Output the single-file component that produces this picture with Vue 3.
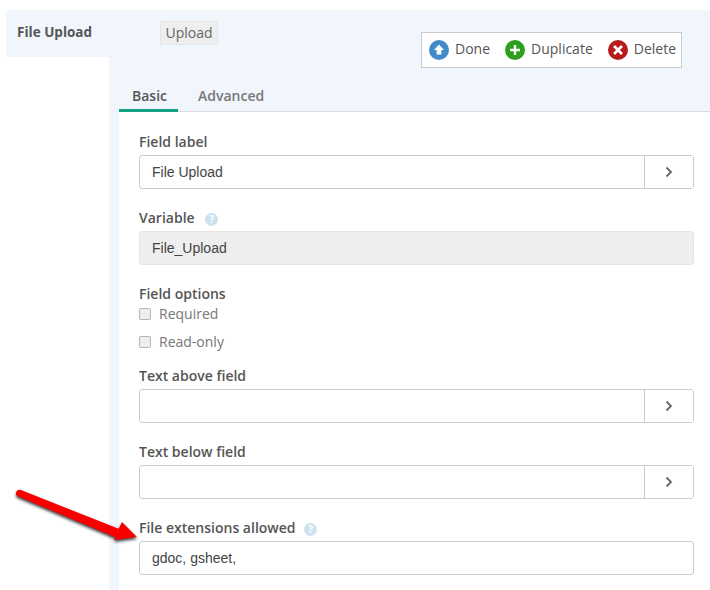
<script setup>
const tabs = [
  { label: 'Basic', active: true },
  { label: 'Advanced', active: false },
]
</script>

<template>
  <div class="page">
    <aside class="side">
      <div class="side-tab">File Upload</div>
    </aside>
    <main class="panel">
      <header class="head">
        <span class="chip">Upload</span>
        <div class="toolbar">
          <span class="tool done">
            <svg class="ico" viewBox="0 0 20 20"><circle cx="10" cy="10" r="10" fill="#428bca" /><path d="M10 4.600 15 10H12.400V14.600H7.600V10H5Z" fill="#fff" /></svg>
            <span class="txt">Done</span>
          </span>
          <span class="tool dup">
            <svg class="ico" viewBox="0 0 20 20"><circle cx="10" cy="10" r="10" fill="#2ca01c" /><path d="M10 5V15M5 10H15" stroke="#fff" stroke-width="2.400" fill="none" /></svg>
            <span class="txt">Duplicate</span>
          </span>
          <span class="tool del">
            <svg class="ico" viewBox="0 0 20 20"><circle cx="10" cy="10" r="10" fill="#b71c1c" /><path d="M6 6 14 14M14 6 6 14" stroke="#fff" stroke-width="2.600" fill="none" /></svg>
            <span class="txt">Delete</span>
          </span>
        </div>
      </header>
      <nav class="tabs">
        <span v-for="t in tabs" :key="t.label" class="tab" :class="{ active: t.active }">{{ t.label }}</span>
      </nav>
      <section class="form">
        <div class="group">
          <label class="lbl">Field label</label>
          <div class="inp-row">
            <input class="inp" value="File Upload" />
            <button class="go"><svg viewBox="0 0 10 12" width="10" height="12"><path d="M2.500 1.500 7 6 2.500 10.500" fill="none" stroke="#666" stroke-width="1.800" /></svg></button>
          </div>
        </div>
        <div class="group">
          <label class="lbl">Variable <span class="help wide">?</span></label>
          <input class="inp solo off" value="File_Upload" readonly />
        </div>
        <div class="opts">
          <label class="lbl short">Field options</label>
          <label class="chk"><input type="checkbox" />Required</label>
          <label class="chk"><input type="checkbox" />Read-only</label>
        </div>
        <div class="group">
          <label class="lbl">Text above field</label>
          <div class="inp-row">
            <input class="inp" />
            <button class="go"><svg viewBox="0 0 10 12" width="10" height="12"><path d="M2.500 1.500 7 6 2.500 10.500" fill="none" stroke="#666" stroke-width="1.800" /></svg></button>
          </div>
        </div>
        <div class="group">
          <label class="lbl">Text below field</label>
          <div class="inp-row">
            <input class="inp" />
            <button class="go"><svg viewBox="0 0 10 12" width="10" height="12"><path d="M2.500 1.500 7 6 2.500 10.500" fill="none" stroke="#666" stroke-width="1.800" /></svg></button>
          </div>
        </div>
        <div class="group">
          <label class="lbl">File extensions allowed <span class="help">?</span></label>
          <input class="inp solo" value="gdoc, gsheet," />
        </div>
      </section>
    </main>
    <svg class="arrow" viewBox="0 0 150 70" width="150" height="70">
      <path class="arrow-shape" d="M20.300 10.800 118.700 49.800 122 43 137 58 114 61 115.300 58.200 17.700 17.200A3.500 3.500 0 0 1 20.300 10.800Z" fill="#f80000" />
    </svg>
  </div>
</template>

<style>
html, body { margin: 0; background: #fff; }
</style>

<style scoped>
.page {
  position: relative;
  display: flex;
  width: 710px;
  height: 590px;
  box-sizing: border-box;
  padding: 10px 0 0 6px;
  overflow: hidden;
  background: #fff;
  font-family: "Open Sans", sans-serif;
  color: #555;
}
.side { width: 103px; flex: none; }
.side-tab {
  height: 47px;
  box-sizing: border-box;
  padding: 12px 0 0 11px;
  background: #f1f6fd;
  font-size: 13.5px;
  font-weight: 700;
  line-height: 20px;
  color: #555;
}
.panel {
  flex: 1;
  min-width: 0;
  display: flex;
  flex-direction: column;
  background: #f1f6fd;
  padding-left: 10px;
}
.head {
  display: flex;
  align-items: flex-start;
  justify-content: space-between;
  height: 74px;
  box-sizing: border-box;
  padding: 11px 28px 0 41px;
  flex: none;
}
.chip {
  width: 58px;
  height: 24px;
  box-sizing: border-box;
  border: 1px solid #e6e6e6;
  background: #eee;
  font-size: 14px;
  line-height: 21px;
  text-align: center;
  color: #666;
}
.toolbar {
  display: flex;
  align-items: center;
  width: 261px;
  height: 36px;
  margin-top: 11px;
  box-sizing: border-box;
  border: 1px solid #ccc;
  background: #fff;
  padding-left: 7px;
  font-size: 14px;
  color: #555;
}
.tool { display: flex; align-items: center; gap: 6px; }
.txt { padding-bottom: 3px; }
.dup { margin-left: 15px; }
.del { margin-left: 15px; }
.ico { width: 20px; height: 20px; flex: none; }
.tabs {
  display: flex;
  height: 27px;
  flex: none;
  border-bottom: 1px solid #ddd;
  box-sizing: content-box;
}
.tab {
  font-size: 14px;
  font-weight: 600;
  line-height: 24px;
  color: #777;
  padding: 0 13px;
  margin-right: 7px;
  height: 27px;
  box-sizing: border-box;
}
.tab.active {
  width: 59px;
  color: #555;
  border-bottom: 3px solid #13a085;
  margin-bottom: -1px;
  height: 28px;
}
.form {
  flex: 1;
  background: #fff;
  padding: 20px 16px 0 20px;
}
.group { margin-bottom: 19px; }
.lbl {
  display: block;
  height: 23px;
  font-size: 14px;
  font-weight: 600;
  line-height: 20px;
  color: #555;
}
.lbl.short { height: 20px; }
.help {
  display: inline-block;
  width: 13px;
  height: 13px;
  margin-left: 5px;
  border-radius: 50%;
  background: #cde2ee;
  color: #fff;
  font-size: 10px;
  font-weight: 700;
  line-height: 13px;
  text-align: center;
  vertical-align: 0;
}
.help.wide { margin-left: 7px; }
.inp-row {
  display: flex;
  height: 34px;
  box-sizing: border-box;
  border: 1px solid #ccc;
  border-radius: 3px;
  background: #fff;
}
.inp {
  flex: 1;
  min-width: 0;
  border: 0;
  padding: 0 12px;
  outline: 0;
  background: transparent;
  font-family: "Liberation Sans", sans-serif;
  font-size: 14px;
  color: #444;
}
.inp.solo {
  display: block;
  width: 100%;
  height: 34px;
  box-sizing: border-box;
  border: 1px solid #ccc;
  border-radius: 3px;
  background: #fff;
}
.inp.solo.off {
  background: #eee;
  border-color: #e4e4e4;
}
.go {
  width: 49px;
  flex: none;
  display: flex;
  align-items: center;
  justify-content: center;
  border: 0;
  border-left: 1px solid #ccc;
  padding: 0;
  background: #fff;
}
.opts { margin-bottom: 15px; }
.chk {
  display: flex;
  align-items: center;
  height: 20px;
  margin-top: -1px;
  margin-bottom: 9px;
  font-size: 14px;
  color: #777;
}
.chk:last-child { margin-bottom: 0; }
.chk input {
  appearance: none;
  width: 12px;
  height: 12px;
  margin: 2px 8px 0 0;
  border: 1px solid #b5b5b5;
  border-radius: 2px;
  background: #eee;
  box-sizing: border-box;
}
.arrow {
  position: absolute;
  left: 0;
  top: 479px;
}
.arrow-shape {
  filter: drop-shadow(0 2px 1.500px rgba(0, 0, 0, 0.75));
}
</style>
